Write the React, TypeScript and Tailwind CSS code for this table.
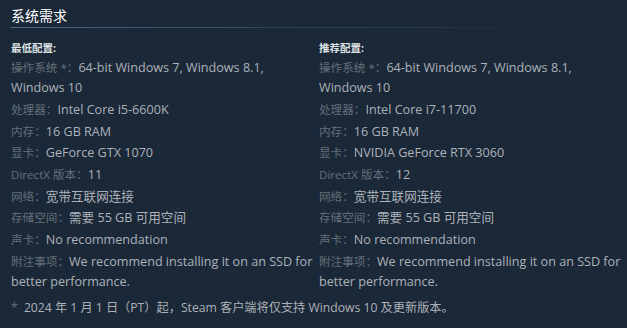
import React from "react";

type Row = { label: string; value: string };

const minRows: Row[] = [
  { label: "操作系统 *：", value: "64-bit Windows 7, Windows 8.1, Windows 10" },
  { label: "处理器：", value: "Intel Core i5-6600K" },
  { label: "内存：", value: "16 GB RAM" },
  { label: "显卡：", value: "GeForce GTX 1070" },
  { label: "DirectX 版本：", value: "11" },
  { label: "网络：", value: "宽带互联网连接" },
  { label: "存储空间：", value: "需要 55 GB 可用空间" },
  { label: "声卡：", value: "No recommendation" },
  { label: "附注事项：", value: "We recommend installing it on an SSD for better performance." },
];

const recRows: Row[] = [
  { label: "操作系统 *：", value: "64-bit Windows 7, Windows 8.1, Windows 10" },
  { label: "处理器：", value: "Intel Core i7-11700" },
  { label: "内存：", value: "16 GB RAM" },
  { label: "显卡：", value: "NVIDIA GeForce RTX 3060" },
  { label: "DirectX 版本：", value: "12" },
  { label: "网络：", value: "宽带互联网连接" },
  { label: "存储空间：", value: "需要 55 GB 可用空间" },
  { label: "声卡：", value: "No recommendation" },
  { label: "附注事项：", value: "We recommend installing it on an SSD for better performance." },
];

function Column({ title, rows }: { title: string; rows: Row[] }) {
  return (
    <div className="w-[302px]">
      <div className="text-[10.5px] leading-[16px] font-bold text-[#dfe3e6]">{title}</div>
      <ul className="mt-[2.3px] flex flex-col gap-[1.7px]">
        {rows.map((r, i) => (
          <li key={i} className="text-[12.6px] leading-[20px] text-[#acb2b8]">
            <span className="text-[#656f79] text-[11.6px]">{r.label}</span>
            {r.value}
          </li>
        ))}
      </ul>
    </div>
  );
}

export default function App() {
  return (
    <div
      className="w-[627px] h-[328px] bg-[#1b2838] pl-[11px] pt-[6px] overflow-hidden"
      style={{ fontFamily: '"Open Sans", "Noto Sans CJK SC", sans-serif' }}
    >
      <div className="text-[14px] leading-[20px] text-white pb-[1px]">系统需求</div>
      <div className="h-[1px] w-[550px] -ml-[1px] bg-gradient-to-r from-[#4b6a82] via-[#2e4558] to-transparent" />
      <div className="mt-[12px] flex gap-[6px]">
        <Column title="最低配置:" rows={minRows} />
        <Column title="推荐配置:" rows={recRows} />
      </div>
      <div className="mt-[6.7px] text-[12.2px] leading-[20px] text-[#acb2b8]">
        <span className="text-[#656f79] mr-[3px]">*</span> 2024 年 1 月 1 日（PT）起，Steam 客户端将仅支持 Windows 10 及更新版本。
      </div>
    </div>
  );
}
